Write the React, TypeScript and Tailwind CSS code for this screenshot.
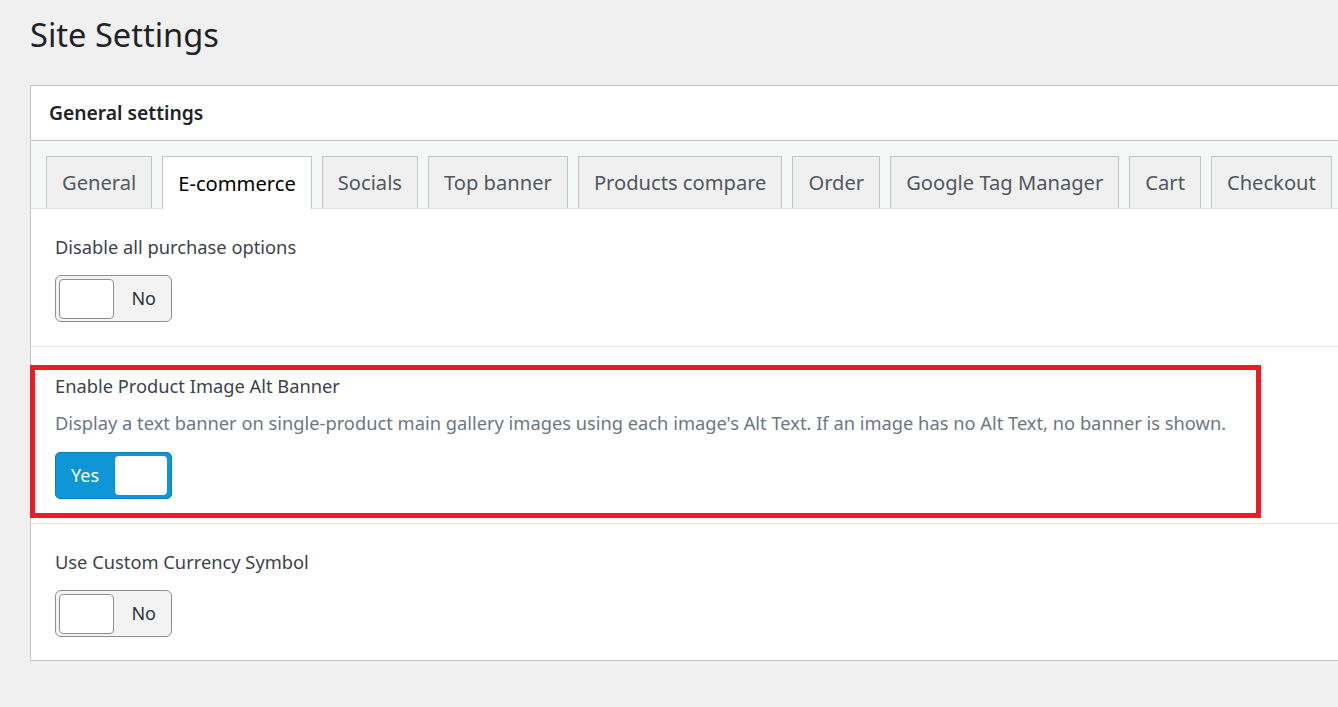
import React from 'react'

const tabs = [
  'General',
  'E-commerce',
  'Socials',
  'Top banner',
  'Products compare',
  'Order',
  'Google Tag Manager',
  'Cart',
  'Checkout',
]

function Toggle({ on }: { on: boolean }) {
  if (on) {
    return (
      <div className="flex h-[47px] w-[117px] items-center rounded-[5px] border border-[#0a7fb8] bg-[#0f96d6] pl-[15px] pr-[4px]">
        <span className="flex-1 text-[18px] text-white">Yes</span>
        <div className="h-[39px] w-[52px] rounded-[4px] bg-white" />
      </div>
    )
  }
  return (
    <div className="flex h-[47px] w-[117px] items-center rounded-[6px] border border-[#8c8f94] bg-[#f3f3f4] pl-[3px] pr-[15px]">
      <div className="h-[40px] w-[55px] rounded-[4px] border border-[#8c8f94] bg-white" />
      <span className="flex-1 text-right text-[18px] text-[#2c3338]">No</span>
    </div>
  )
}

export default function App() {
  return (
    <div
      className="relative min-h-screen overflow-hidden bg-[#f0f0f1]"
      style={{ fontFamily: '"Noto Sans", "Open Sans", sans-serif' }}
    >
      <h1 className="pl-[30px] pt-[13px] text-[32.6px] font-normal leading-[44px] text-[#1d2327]">
        Site Settings
      </h1>

      {/* Card */}
      <div className="ml-[30px] mt-[28px] w-[1330px] border border-[#c3c4c7] bg-white">
        <div className="flex h-[55px] items-center border-b border-[#c3c4c7] pl-[18px]">
          <h2 className="text-[19.3px] font-semibold text-[#1d2327]">General settings</h2>
        </div>

        {/* Tabs */}
        <div className="flex gap-[10px] border-b border-[#e2e4e7] bg-[#f6f7f7] pl-[15px] pt-[15px]">
          {tabs.map((t) => (
            <div
              key={t}
              className={
                t === 'E-commerce'
                  ? '-mb-px flex h-[53px] items-center border border-b-0 border-[#c3c4c7] bg-white px-[15px] text-[20.15px] text-black'
                  : 'flex h-[52px] items-center border border-b-0 border-[#c3c4c7] bg-[#f0f0f1] px-[15px] text-[20.15px] text-[#50575e]'
              }
            >
              {t}
            </div>
          ))}
        </div>

        {/* Rows */}
        <div className="border-b border-[#e8e8e8] pb-[24px] pl-[24px] pt-[25px]">
          <div className="text-[18.3px] leading-[26px] text-[#3c434a]">Disable all purchase options</div>
          <div className="mt-[15px]">
            <Toggle on={false} />
          </div>
        </div>

        <div className="border-b border-[#e8e8e8] pb-[24px] pl-[24px] pt-[26px]">
          <div className="text-[18.3px] leading-[26px] text-[#3c434a]">Enable Product Image Alt Banner</div>
          <div className="mt-[11px] text-[18.3px] leading-[26px] text-[#6c7781]">
            Display a text banner on single-product main gallery images using each image's Alt Text. If an image has no Alt Text, no banner is shown.
          </div>
          <div className="mt-[16px]">
            <Toggle on={true} />
          </div>
        </div>

        <div className="pb-[23px] pl-[24px] pt-[25px]">
          <div className="text-[18.3px] leading-[26px] text-[#3c434a]">Use Custom Currency Symbol</div>
          <div className="mt-[15px]">
            <Toggle on={false} />
          </div>
        </div>
      </div>

      {/* Annotation highlight */}
      <div className="absolute left-[30px] top-[365px] h-[153px] w-[1231px] border-[5px] border-[#ec1c24]" />
    </div>
  )
}
